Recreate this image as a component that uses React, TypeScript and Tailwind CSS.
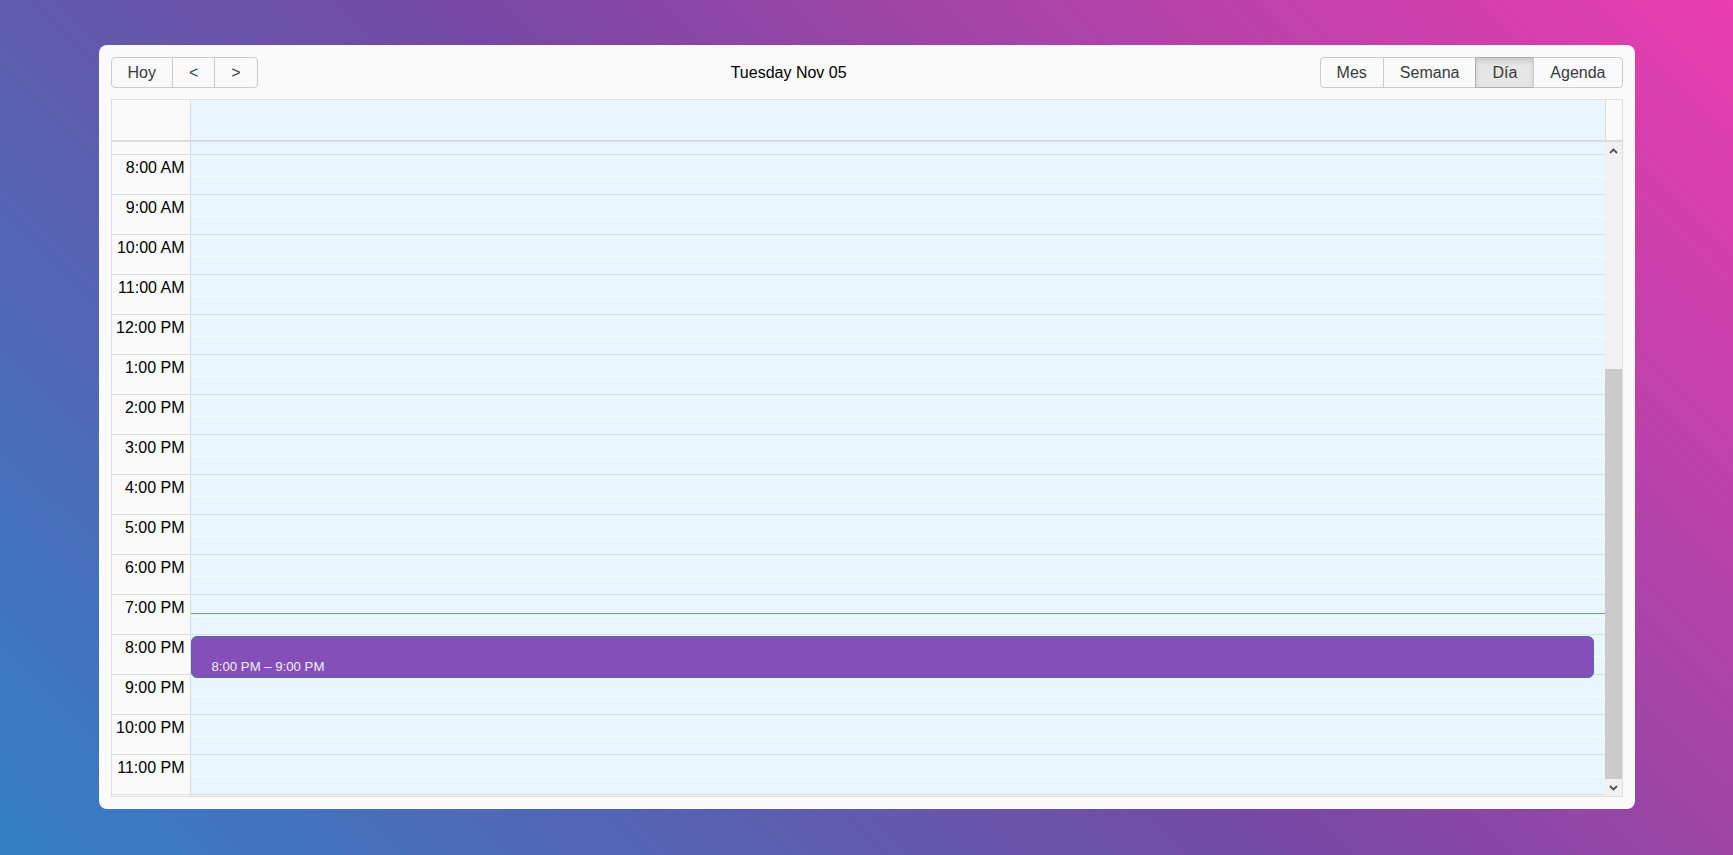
import React from "react";

const hours = [
  "12:00 AM","1:00 AM","2:00 AM","3:00 AM","4:00 AM","5:00 AM","6:00 AM","7:00 AM",
  "8:00 AM","9:00 AM","10:00 AM","11:00 AM","12:00 PM","1:00 PM","2:00 PM","3:00 PM",
  "4:00 PM","5:00 PM","6:00 PM","7:00 PM","8:00 PM","9:00 PM","10:00 PM","11:00 PM",
];

function Chevron({ up }: { up?: boolean }) {
  return (
    <svg width="9" height="6" viewBox="0 0 9 6" className="block">
      {up ? (
        <polyline points="1,5 4.5,1.5 8,5" fill="none" stroke="#505050" strokeWidth="1.8" />
      ) : (
        <polyline points="1,1 4.5,4.5 8,1" fill="none" stroke="#505050" strokeWidth="1.8" />
      )}
    </svg>
  );
}

export default function App() {
  return (
    <div className="min-h-screen w-full bg-[linear-gradient(45deg,#3380c5_0%,#7549a3_50%,#ea3daf_100%)] pt-[45px] font-['Liberation_Sans',Arial,sans-serif]">
      <div className="mx-auto flex h-[764px] w-[1536px] flex-col rounded-lg bg-[#fafafa] p-3">
        {/* Toolbar */}
        <div className="mb-[11px] flex h-[31px] shrink-0 items-center text-[16px] text-[#373a3c]">
          <div className="flex h-full">
            <button className="h-full rounded-l-[4px] border border-[#ccc] px-4 pt-px leading-none">Hoy</button>
            <button className="-ml-px h-full border border-[#ccc] px-4 pt-px leading-none">&lt;</button>
            <button className="-ml-px h-full rounded-r-[4px] border border-[#ccc] px-4 pt-px leading-none">&gt;</button>
          </div>
          <div className="flex-1 px-[10px] pt-px text-center text-black">Tuesday Nov 05</div>
          <div className="flex h-full">
            <button className="h-full rounded-l-[4px] border border-[#ccc] px-4 pt-px leading-none">Mes</button>
            <button className="-ml-px h-full border border-[#ccc] px-4 pt-px leading-none">Semana</button>
            <button className="-ml-px h-full border border-[#adadad] bg-[#e6e6e6] px-4 pt-px leading-none shadow-[inset_0_3px_5px_rgba(0,0,0,0.125)]">Día</button>
            <button className="-ml-px h-full rounded-r-[4px] border border-[#ccc] px-4 pt-px leading-none">Agenda</button>
          </div>
        </div>

        {/* Grid */}
        <div className="flex min-h-0 flex-1 flex-col border border-[#ddd]">
          {/* Header */}
          <div className="flex h-[40px] shrink-0">
            <div className="w-[79px] shrink-0 border-r border-[#ddd] bg-[#fafafa]" />
            <div className="flex-1 bg-[#eaf6ff]" />
            <div className="w-[17px] shrink-0 border-l border-[#ddd] bg-[#fafafa]" />
          </div>

          {/* Content */}
          <div className="flex min-h-0 flex-1 border-t-2 border-[#ddd]">
            <div className="flex min-w-0 flex-1 flex-col justify-end overflow-hidden">
              <div className="flex shrink-0">
                {/* gutter */}
                <div className="w-[79px] shrink-0 border-r border-[#ddd] bg-[#fafafa]">
                  {hours.map((h) => (
                    <div key={h} className="h-[40px] border-b border-[#ddd] pr-[5px] pt-[4px] text-right text-[16px] leading-[18px] text-black">
                      {h}
                    </div>
                  ))}
                  <div className="h-px" />
                </div>
                {/* day column */}
                <div className="relative flex-1 bg-[#eaf6ff]">
                  {hours.map((h) => (
                    <div key={h} className="flex h-[40px] flex-col border-b border-[#ddd]">
                      <div className="h-[22px] border-b border-[#f6fbff]" />
                      <div className="flex-1" />
                    </div>
                  ))}
                  <div className="h-px" />
                  <div className="absolute left-0 right-0 top-[778px] h-px bg-[#74ad31]" />
                  <div className="absolute left-0 right-[11px] top-[801px] h-[42px] rounded-[6px] border border-[#4a6e9e] bg-[#844fb9] pl-[20px] pt-[22px] text-[13.2px] leading-[15px] text-[#f3eefa]">
                    8:00 PM – 9:00 PM
                  </div>
                </div>
              </div>
            </div>

            {/* scrollbar */}
            <div className="flex w-[17px] shrink-0 flex-col bg-[#f1f1f1]">
              <div className="flex h-[17px] shrink-0 items-center justify-center">
                <Chevron up />
              </div>
              <div className="flex flex-1 flex-col justify-end">
                <div className="h-[410px] bg-[#cbcbcb]" />
              </div>
              <div className="flex h-[17px] shrink-0 items-center justify-center">
                <Chevron />
              </div>
            </div>
          </div>
        </div>
      </div>
    </div>
  );
}
